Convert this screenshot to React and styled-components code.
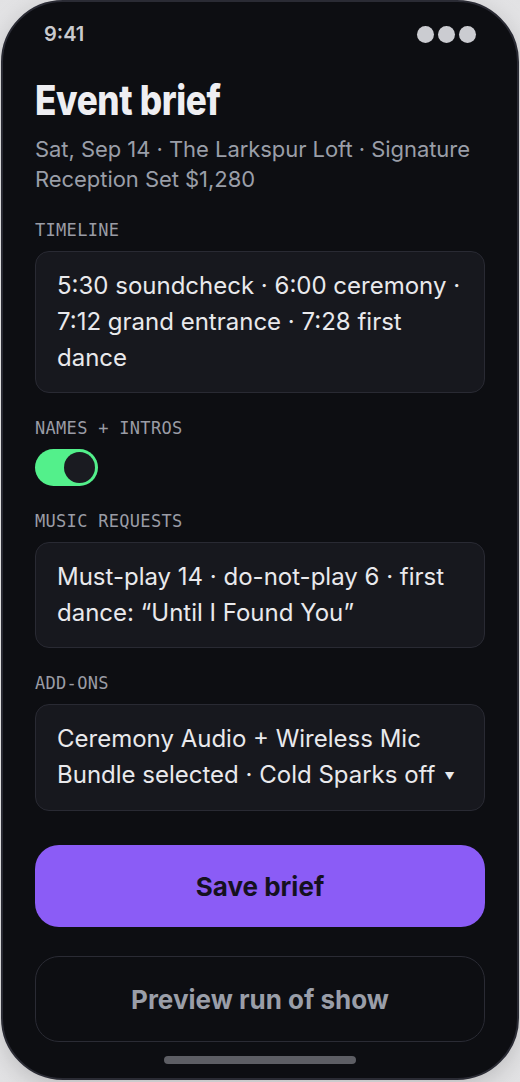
import React from "react";
import styled, { createGlobalStyle } from "styled-components";

const GlobalStyle = createGlobalStyle`
  html, body {
    margin: 0;
    padding: 0;
    background: #ececee;
  }
  * {
    box-sizing: border-box;
  }
`;

const Stage = styled.div`
  width: 520px;
  height: 1082px;
  padding: 0 1px 2px;
  background: radial-gradient(circle at 50% 50%, #f4f4f5 60%, #e2e2e4 100%);
`;

const Phone = styled.div`
  width: 518px;
  height: 1080px;
  background: #0d0e12;
  border: 2px solid #2a2b34;
  border-radius: 62px;
  padding: 0 32px;
  display: flex;
  flex-direction: column;
  font-family: Inter, "Noto Sans", sans-serif;
  overflow: hidden;
  box-shadow: 0 6px 24px rgba(0, 0, 0, 0.18);
`;

const StatusBar = styled.div`
  height: 64px;
  display: flex;
  align-items: center;
  justify-content: space-between;
  padding: 0 9px;
  color: #c9cace;
  font-size: 20px;
  font-weight: 600;
`;

const Dots = styled.div`
  display: flex;
  gap: 4px;
`;

const Dot = styled.span`
  width: 17px;
  height: 17px;
  border-radius: 50%;
  background: #cbccd1;
`;

const Title = styled.h1`
  margin: 6px 0 0;
  font-family: Inter, "Liberation Sans", sans-serif;
  font-size: 41px;
  font-weight: 800;
  line-height: 56px;
  color: #eeeef2;
  letter-spacing: -0.4px;
  transform: scaleX(0.855);
  transform-origin: left center;
`;

const Subtitle = styled.p`
  margin: 6px 0 0;
  font-size: 22px;
  line-height: 30px;
  letter-spacing: -0.05px;
  color: #9a9ea8;
`;

const Fields = styled.div`
  margin-top: 27px;
  display: flex;
  flex-direction: column;
  gap: 26px;
`;

const Field = styled.div`
  display: flex;
  flex-direction: column;
  gap: 12px;
`;

const Label = styled.div`
  font-family: "DejaVu Sans Mono", "Liberation Mono", monospace;
  font-size: 17px;
  line-height: 18px;
  letter-spacing: 0.3px;
  color: #9a9ca5;
`;

const Card = styled.div`
  background: #17181e;
  border: 1px solid #292a33;
  border-radius: 14px;
  padding: 16px 18px 16px 21px;
  font-size: 24px;
  line-height: 36px;
  color: #e9e9ec;
`;

const Caret = styled.span`
  font-size: 10px;
  margin-left: 9px;
  vertical-align: 3px;
`;

const Toggle = styled.div`
  width: 63px;
  height: 37px;
  border-radius: 19px;
  background: ${(p) => (p.on ? "#53f08b" : "#33343c")};
  display: flex;
  align-items: center;
  justify-content: ${(p) => (p.on ? "flex-end" : "flex-start")};
  padding: 0 3px;
`;

const Knob = styled.span`
  width: 31px;
  height: 31px;
  border-radius: 50%;
  background: #1a1b21;
`;

const Actions = styled.div`
  margin-top: 34px;
  display: flex;
  flex-direction: column;
  gap: 29px;
`;

const Button = styled.button`
  width: 100%;
  height: ${(p) => (p.primary ? "82px" : "86px")};
  border-radius: 24px;
  border: ${(p) => (p.primary ? "none" : "1.5px solid #2a2b34")};
  background: ${(p) => (p.primary ? "#8b5cf6" : "transparent")};
  color: ${(p) => (p.primary ? "#15111f" : "#9a9ea8")};
  font-family: Inter, "Noto Sans", sans-serif;
  font-size: 26px;
  font-weight: 700;
`;

const HomeBar = styled.div`
  margin: 14px auto 0;
  width: 192px;
  height: 8px;
  border-radius: 4px;
  background: #5d5e64;
`;

export default function App() {
  return (
    <>
      <GlobalStyle />
      <Stage>
        <Phone>
          <StatusBar>
            <span>9:41</span>
            <Dots>
              <Dot />
              <Dot />
              <Dot />
            </Dots>
          </StatusBar>
          <Title>Event brief</Title>
          <Subtitle>
            Sat, Sep 14 · The Larkspur Loft · Signature Reception Set $1,280
          </Subtitle>
          <Fields>
            <Field>
              <Label>TIMELINE</Label>
              <Card>
                5:30 soundcheck · 6:00 ceremony · 7:12 grand entrance · 7:28
                first dance
              </Card>
            </Field>
            <Field>
              <Label>NAMES + INTROS</Label>
              <Toggle on>
                <Knob />
              </Toggle>
            </Field>
            <Field>
              <Label>MUSIC REQUESTS</Label>
              <Card>
                Must-play 14 · do-not-play 6 · first dance: “Until I Found You”
              </Card>
            </Field>
            <Field>
              <Label>ADD-ONS</Label>
              <Card>
                Ceremony Audio + Wireless Mic Bundle selected · Cold Sparks off
                <Caret>▼</Caret>
              </Card>
            </Field>
          </Fields>
          <Actions>
            <Button primary>Save brief</Button>
            <Button>Preview run of show</Button>
          </Actions>
          <HomeBar />
        </Phone>
      </Stage>
    </>
  );
}
